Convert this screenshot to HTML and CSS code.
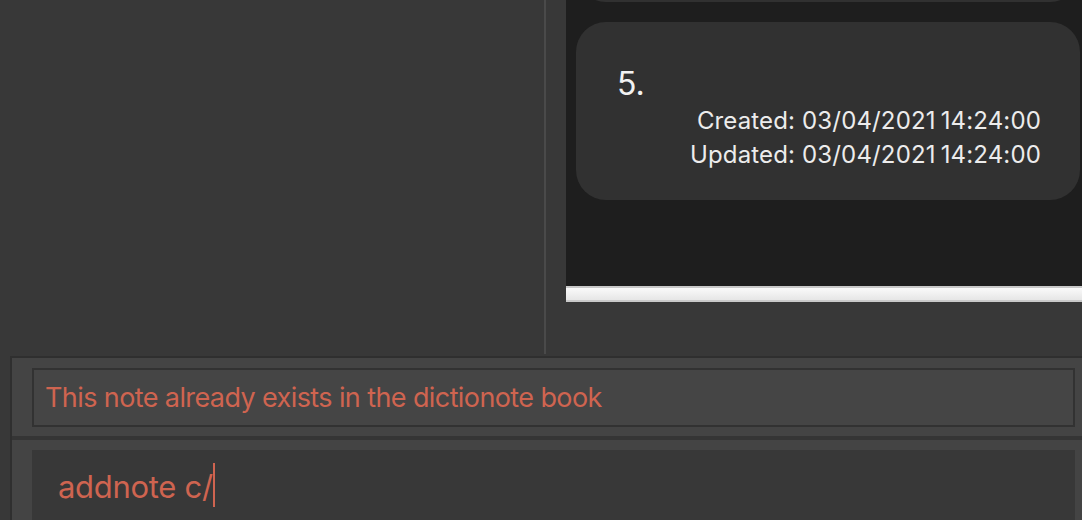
FILE: index.html
```html
<!DOCTYPE html>
<html>
<head>
<meta charset="utf-8">
<link rel="stylesheet" href="styles.css">
</head>
<body>
<div class="app">
  <div class="top">
    <div class="left-panel"></div>
    <div class="right-panel">
      <div class="list">
        <div class="card card-prev"></div>
        <div class="card">
          <div class="card-index">5.</div>
          <div class="card-dates">
            <div>Created: 03/04/2021<span class="time">14:24:00</span></div>
            <div>Updated: 03/04/2021<span class="time">14:24:00</span></div>
          </div>
        </div>
      </div>
      <div class="hscroll"></div>
    </div>
  </div>
  <div class="bottom">
    <div class="result-panel">
      <div class="result-box">This note already exists in the dictionote book</div>
    </div>
    <div class="command-panel">
      <div class="command-box"><span class="command-text">addnote c/</span><span class="caret"></span></div>
    </div>
  </div>
</div>
</body>
</html>
```
FILE: styles.css
```css
html, body {
  margin: 0;
  padding: 0;
  background: #383838;
  width: 1082px;
  height: 520px;
  overflow: hidden;
  font-family: Inter, "Noto Sans", sans-serif;
}

.app {
  display: flex;
  flex-direction: column;
  height: 520px;
}

.top {
  display: flex;
  height: 356px;
  flex: none;
}

.left-panel {
  width: 544px;
  height: 354px;
  border-right: 2px solid #4a4a4a;
  background: #383838;
}

.right-panel {
  flex: 1;
  padding-left: 20px;
  display: flex;
  flex-direction: column;
}

.list {
  height: 286px;
  background: #1e1e1e;
  overflow: hidden;
  display: flex;
  flex-direction: column;
  gap: 20px;
  padding-left: 10px;
  padding-right: 2px;
}

.card {
  background: #313131;
  border-radius: 30px;
  height: 178px;
  flex: none;
  box-sizing: border-box;
  padding: 42px 39px 0 41px;
  color: #ececec;
}

.card-prev {
  margin-top: -176px;
}

.card-index {
  font-size: 32px;
  line-height: 40px;
  color: #f2f2f2;
}

.card-dates {
  text-align: right;
  font-size: 24px;
  line-height: 34px;
  letter-spacing: 0.15px;
}

.time {
  margin-left: 5px;
}

.hscroll {
  height: 16px;
  box-sizing: border-box;
  border-top: 2px solid #c9c9c9;
  border-bottom: 2px solid #c9c9c9;
  background: linear-gradient(#fafafa, #e6e6e6);
}

.bottom {
  margin-left: 10px;
  border-left: 2px solid #2f2f2f;
  border-top: 2px solid #2f2f2f;
  flex: 1;
  display: flex;
  flex-direction: column;
}

.result-panel {
  background: #444444;
  height: 68px;
  padding: 10px 7px 0 20px;
  border-bottom: 4px solid #353535;
  flex: none;
}

.result-box {
  height: 59px;
  box-sizing: border-box;
  border: 2px solid #323232;
  background: #454545;
  color: #cf6450;
  font-size: 27px;
  line-height: 55px;
  padding-left: 11px;
  letter-spacing: -0.6px;
  white-space: nowrap;
}

.command-panel {
  flex: 1;
  background: #444444;
  padding: 10px 7px 0 20px;
}

.command-box {
  height: 100%;
  background: #383838;
  display: flex;
  align-items: flex-start;
  padding-left: 26px;
  padding-right: 2px;
}

.command-text {
  color: #cf6450;
  font-size: 31px;
  line-height: 36px;
  margin-top: 19px;
  letter-spacing: -0.3px;
}

.caret {
  width: 2px;
  height: 44px;
  background: #cf6450;
  margin-top: 13px;
  margin-left: 0;
}
```
